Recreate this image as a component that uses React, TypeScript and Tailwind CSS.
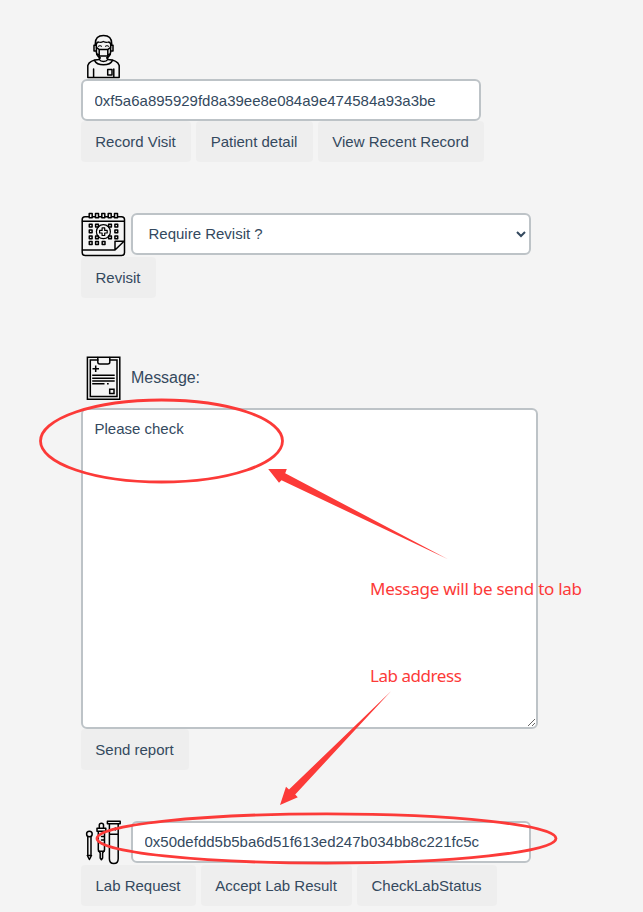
import type { ReactNode } from 'react';

function ActionButton({ className, children }: { className: string; children: ReactNode }) {
  return (
    <button
      className={`h-[41px] shrink-0 whitespace-nowrap rounded-[4px] bg-[#eeeeee] pr-px pt-px text-center text-[15px] ${className}`}
    >
      {children}
    </button>
  );
}

function IconFrame({ children, className = '' }: { children: ReactNode; className?: string }) {
  return (
    <svg
      viewBox="0 0 45 45"
      className={`block h-[45px] w-[45px] shrink-0 ${className}`}
      fill="none"
      stroke="#000"
      strokeWidth="1.5"
      strokeLinecap="round"
      strokeLinejoin="round"
    >
      {children}
    </svg>
  );
}

function DoctorIcon() {
  return (
    <IconFrame>
      <path d="M14.3 11V9.5Q14.3 1.4 22.5 1.4T30.7 9.5V11" />
      <path d="M15.3 12Q14.8 8.6 17.5 8Q20 8.8 22.3 7.5Q25 8.8 27.5 8Q30.2 8.6 29.8 12" strokeWidth="1.3" />
      <path d="M14.8 11.2H13V17H15.4M30.2 11.2H32V17H29.6" />
      <path d="M15.4 12V18.5Q16 22 19.3 24M29.6 12V18.5Q29 22 25.7 24" />
      <path d="M18.2 15.4H26.8V22H18.2ZM15.5 13.5 18 15.4M29.5 13.5 27 15.4M15.8 20.5H18M27 20.5H29.2" />
      <path d="M17.3 12.2Q19 10.8 20.7 12.2M24.3 12.2Q26 10.8 27.7 12.2" strokeWidth="1" />
      <path d="M18.3 23V25.5Q8.5 26 6.8 31.5V43.6H38.2V31.5Q36.5 26 26.7 25.5V23" />
      <path d="M13.5 26.4Q15.5 30.8 22.5 30.8T31.5 26.4M18.3 25.5Q19.5 27.6 22.5 27.6T26.7 25.5" />
      <path d="M12.6 35V43M32.8 35V43M26.7 35.5H31V41H26.7Z" />
    </IconFrame>
  );
}

const calendarCells = [
  [9.7, 13.7], [16, 13.7], [29, 13.7], [35.3, 13.7],
  [9.7, 19.3], [35.3, 19.3],
  [9.7, 25.3], [16, 25.3], [29, 25.3], [35.3, 25.3],
  [9.7, 31], [16, 31], [22.6, 31],
];

function CalendarIcon() {
  return (
    <IconFrame>
      <path d="M7.5 4.7H4Q1.2 4.7 1.2 7.5V40.7Q1.2 43.5 4.2 43.5H40.5Q43.5 43.5 43.5 40.7V7.5Q43.5 4.7 40.5 4.7H37" />
      <path d="M11.5 4.7H14M18 4.7H20.5M24.5 4.7H27M31 4.7H33M1.5 9.2H43.2M1.5 38H34L43 29.2M34 38V29.2H43" />
      {[8.2, 14.5, 20.8, 27.2, 33.5].map((x) => (
        <path key={x} d={`M${x} 1.6h3v4.2h-3z`} />
      ))}
      {calendarCells.map(([x, y]) => (
        <path key={`${x}-${y}`} d={`M${x - 1.4} ${y - 1.4}h2.8v2.8h-2.8z`} />
      ))}
      <circle cx="22.4" cy="19.7" r="7" strokeWidth="1.2" />
      <path d="M21.1 15.9h2.6v2.5h2.5v2.6h-2.5v2.5h-2.6v-2.5h-2.5v-2.6h2.5z" strokeWidth="1.2" />
    </IconFrame>
  );
}

function ClipboardIcon() {
  return (
    <IconFrame className="translate-y-px">
      <path d="M6.4 1.2H38.8V43.3H6.4Z" strokeLinejoin="miter" />
      <path d="M17 4H9.3V40.5H36V4H29" strokeLinejoin="miter" />
      <path d="M16.8 1.5V6Q16.8 8 18.8 8H26.8Q28.8 8 28.8 6V1.5" />
      <path d="M14.7 9.5V16M11.5 12.7H18M11.2 19.2H33.7M11.2 22.2H33.7M11.2 25H33.7M11.2 27.8H23.5M26 27.8H27.7" strokeLinecap="butt" />
      <path d="M28.7 33.2H33V37.5H28.7Z" strokeLinejoin="miter" />
    </IconFrame>
  );
}

function TestTubesIcon() {
  return (
    <IconFrame>
      <circle cx="8.4" cy="14" r="2.8" />
      <path d="M6.8 16.8V36.5L8.4 39.5L10 36.5V16.8M6.3 35.5H10.5" />
      <path d="M18.3 8V5Q18.3 3.2 20.4 3.2T22.5 5V8M16 8.2H24.8V11.2H16ZM17.3 11.2V30L19.2 33V38L20.4 39.7L21.6 38V33L23.5 30V11.2M17.5 31.3H23.3M20.5 16.5H23M20.5 20H23M20.5 23.5H23" />
      <path d="M26.4 1.2H39.2V3.7H26.4ZM28.4 3.7V38.7Q28.4 43.5 32.8 43.5T37.2 38.7V3.7M28.5 14.3H37M34.3 8V10" />
    </IconFrame>
  );
}

function Annotations() {
  return (
    <div className="pointer-events-none absolute inset-0 text-[#fc3a38]">
      <svg viewBox="0 0 643 912" className="absolute inset-0 h-[912px] w-[643px]" fill="none">
        <ellipse cx="161.5" cy="441" rx="121" ry="41" stroke="currentColor" strokeWidth="2.8" />
        <ellipse cx="326.5" cy="838.5" rx="229.5" ry="24.6" stroke="currentColor" strokeWidth="2.8" />
        <path d="M268.2 469 286.8 469 285.2 473.2 448 559.3 281.5 480.2 279 482.7Z" fill="currentColor" />
        <path d="M280 805 286 786.8 289 789.5 391.2 691 295.2 794.5 297.8 797.3Z" fill="currentColor" />
      </svg>
      <span className="absolute left-[370px] top-[577px] whitespace-nowrap font-['Noto_Sans',sans-serif] text-[17px] leading-6 tracking-[-0.27px]">
        Message will be send to lab
      </span>
      <span className="absolute left-[370px] top-[664px] whitespace-nowrap font-['Noto_Sans',sans-serif] text-[17px] leading-6 tracking-[-0.45px]">
        Lab address
      </span>
    </div>
  );
}

const field =
  'block h-[42px] w-[400px] shrink-0 rounded-[6px] border-2 border-[#bdc3c7] bg-white text-[15px] text-[#34495e] outline-none';

export default function App() {
  return (
    <main className="relative h-[912px] w-[643px] overflow-hidden bg-[#f4f4f4] pl-[81px] pt-[34px] font-['Liberation_Sans',Arial,sans-serif] text-[15px] text-[#34495e]">
      <section className="flex h-[178px] flex-col items-start">
        <DoctorIcon />
        <input className={`${field} px-[11.5px]`} defaultValue="0xf5a6a895929fd8a39ee8e084a9e474584a93a3be" />
        <div className="flex gap-[5px]">
          <ActionButton className="w-[110px]">Record Visit</ActionButton>
          <ActionButton className="w-[117px]">Patient detail</ActionButton>
          <ActionButton className="w-[166px]">View Recent Record</ActionButton>
        </div>
      </section>

      <section className="h-[143px]">
        <div className="flex h-[45px] items-start gap-[5px]">
          <CalendarIcon />
          <select className={`${field} mt-px pb-[2px] pl-[11.5px] pr-[13px]`}>
            <option>Require Revisit ?</option>
          </select>
        </div>
        <ActionButton className="w-[75px]">Revisit</ActionButton>
      </section>

      <section className="h-[465px]">
        <div className="flex h-[53px] items-start gap-[5px]">
          <ClipboardIcon />
          <label className="pt-[11px] text-[16px] leading-6 tracking-[-0.05px]">Message:</label>
        </div>
        <textarea
          className="block h-[321px] w-[457px] resize rounded-[6px] border-2 border-[#bdc3c7] bg-white px-[11.5px] py-[8px] text-[15px] leading-[22px] outline-none"
          defaultValue="Please check"
        />
        <ActionButton className="w-[108px]">Send report</ActionButton>
      </section>

      <section>
        <div className="flex h-[45px] items-start gap-[5px]">
          <TestTubesIcon />
          <input className={`${field} mt-px px-[11.5px] pb-[2px]`} defaultValue="0x50defdd5b5ba6d51f613ed247b034bb8c221fc5c" />
        </div>
        <div className="flex gap-[5px]">
          <ActionButton className="w-[115px]">Lab Request</ActionButton>
          <ActionButton className="w-[151px]">Accept Lab Result</ActionButton>
          <ActionButton className="w-[140px]">CheckLabStatus</ActionButton>
        </div>
      </section>
      <Annotations />
    </main>
  );
}
